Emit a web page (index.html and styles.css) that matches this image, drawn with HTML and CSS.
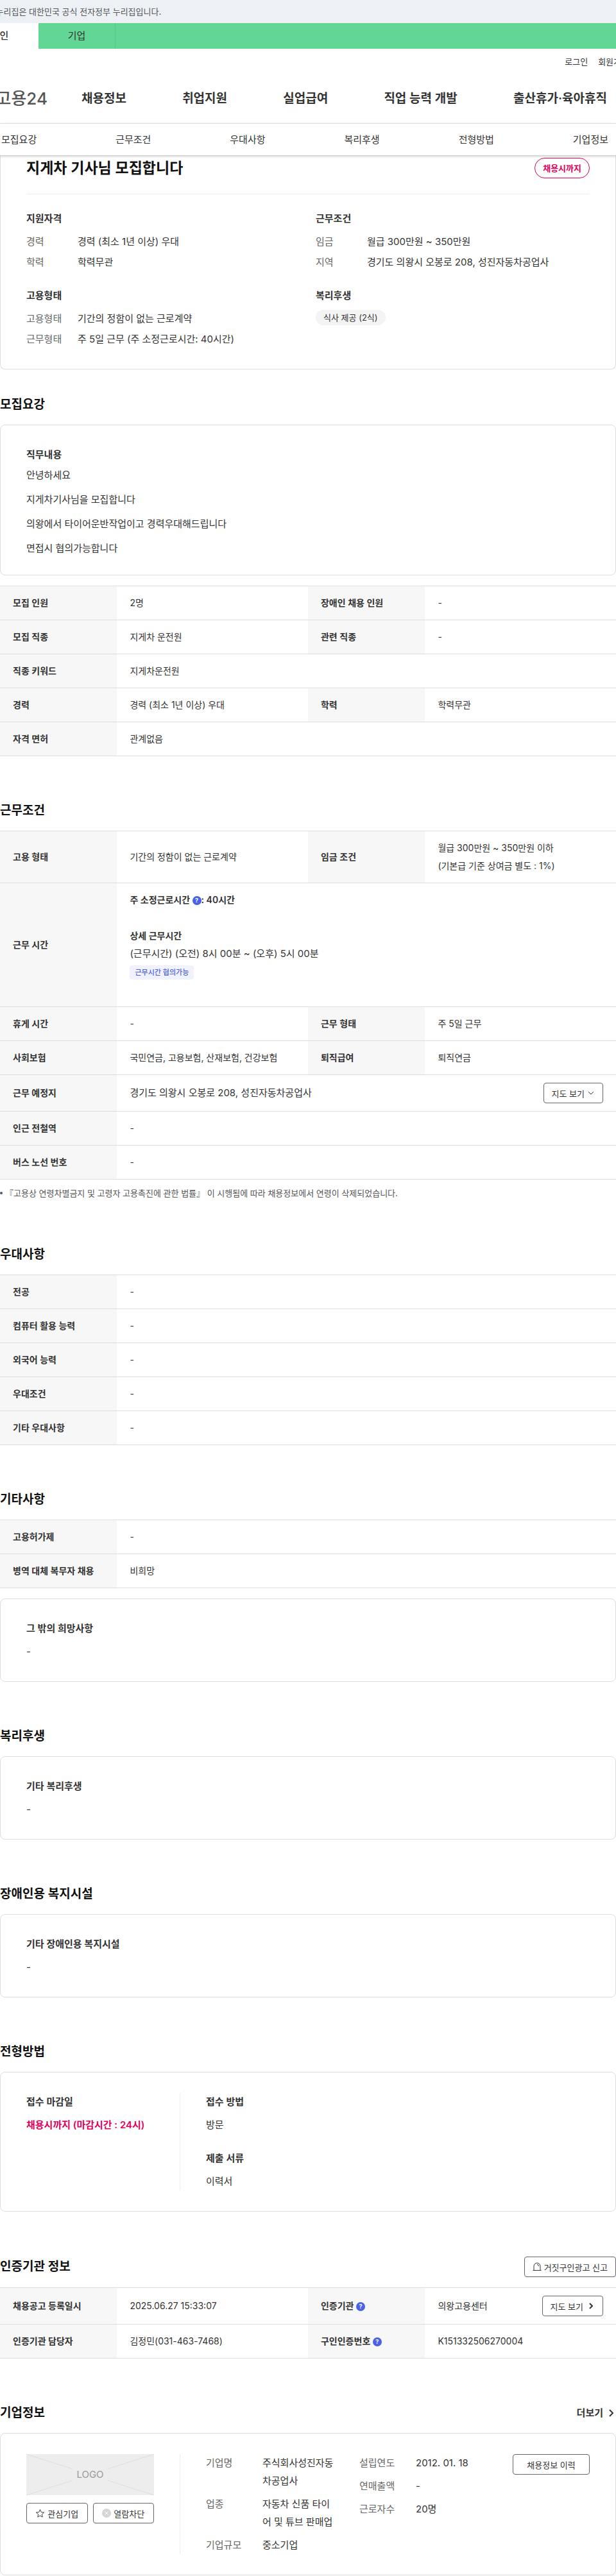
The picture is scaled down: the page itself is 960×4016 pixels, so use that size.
FILE: index.html
```html
<!DOCTYPE html>
<html lang="ko">
<head>
    <meta charset="UTF-8">
    <meta name="viewport" content="width=device-width, initial-scale=1.0">
    <title>지게차 기사님 모집합니다 | 고용24</title>
    <link rel="stylesheet" href="styles.css">
</head>
<body>
    <header>
        <div class="gov-bar"><p>이 누리집은 대한민국 공식 전자정부 누리집입니다.</p></div>
        <div class="member-tabs">
            <a href="#" class="active">개인</a>
            <a href="#">기업</a>
        </div>
        <div class="util">
            <a href="#">로그인</a>
            <a href="#">회원가입</a>
        </div>
        <div class="gnb">
            <a href="#" class="logo">고용24</a>
            <nav>
                <a href="#">채용정보</a>
                <a href="#">취업지원</a>
                <a href="#">실업급여</a>
                <a href="#">직업 능력 개발</a>
                <a href="#">출산휴가·육아휴직</a>
            </nav>
        </div>
    </header>

    <nav class="anchor-nav">
        <a href="#recruit">모집요강</a>
        <a href="#work">근무조건</a>
        <a href="#prefer">우대사항</a>
        <a href="#welfare">복리후생</a>
        <a href="#method">전형방법</a>
        <a href="#company">기업정보</a>
    </nav>

    <main>
        <div class="box summary">
            <div class="summary-head">
                <h1>지게차 기사님 모집합니다</h1>
                <span class="pill">채용시까지</span>
            </div>
            <div class="summary-grid">
                <div>
                    <h3>지원자격</h3>
                    <dl>
                        <dt>경력</dt><dd>경력 (최소 1년 이상) 우대</dd>
                        <dt>학력</dt><dd>학력무관</dd>
                    </dl>
                </div>
                <div>
                    <h3>근무조건</h3>
                    <dl>
                        <dt>임금</dt><dd>월급 300만원 ~ 350만원</dd>
                        <dt>지역</dt><dd>경기도 의왕시 오봉로 208, 성진자동차공업사</dd>
                    </dl>
                </div>
                <div>
                    <h3>고용형태</h3>
                    <dl>
                        <dt>고용형태</dt><dd>기간의 정함이 없는 근로계약</dd>
                        <dt>근무형태</dt><dd>주 5일 근무 (주 소정근로시간: 40시간)</dd>
                    </dl>
                </div>
                <div>
                    <h3>복리후생</h3>
                    <span class="tag">식사 제공 (2식)</span>
                </div>
            </div>
        </div>

        <section id="recruit">
            <div class="section-head"><h2>모집요강</h2></div>
            <div class="box job-desc">
                <h3>직무내용</h3>
                <p>안녕하세요</p>
                <p>지게차기사님을 모집합니다</p>
                <p>의왕에서 타이어운반작업이고 경력우대해드립니다</p>
                <p>면접시 협의가능합니다</p>
            </div>
            <table>
                <colgroup><col class="col-th"><col class="col-td"><col class="col-th"><col class="col-td"></colgroup>
                <tr><th>모집 인원</th><td>2명</td><th>장애인 채용 인원</th><td>-</td></tr>
                <tr><th>모집 직종</th><td>지게차 운전원</td><th>관련 직종</th><td>-</td></tr>
                <tr><th>직종 키워드</th><td colspan="3">지게차운전원</td></tr>
                <tr><th>경력</th><td>경력 (최소 1년 이상) 우대</td><th>학력</th><td>학력무관</td></tr>
                <tr><th>자격 면허</th><td colspan="3">관계없음</td></tr>
            </table>
        </section>

        <section id="work">
            <div class="section-head"><h2>근무조건</h2></div>
            <table>
                <colgroup><col class="col-th"><col class="col-td"><col class="col-th"><col class="col-td"></colgroup>
                <tr>
                    <th>고용 형태</th><td>기간의 정함이 없는 근로계약</td>
                    <th>임금 조건</th><td>월급 300만원 ~ 350만원 이하<br>(기본급 기준 상여금 별도 : 1%)</td>
                </tr>
                <tr>
                    <th>근무 시간</th>
                    <td colspan="3" class="work-time">
                        <p><strong>주 소정근로시간 <button type="button" class="help">?</button>: 40시간</strong></p>
                        <p><strong>상세 근무시간</strong></p>
                        <p class="time">(근무시간) (오전) 8시 00분 ~ (오후) 5시 00분</p>
                        <p><span class="label">근무시간 협의가능</span></p>
                    </td>
                </tr>
                <tr><th>휴게 시간</th><td>-</td><th>근무 형태</th><td>주 5일 근무</td></tr>
                <tr><th>사회보험</th><td>국민연금, 고용보험, 산재보험, 건강보험</td><th>퇴직급여</th><td>퇴직연금</td></tr>
                <tr>
                    <th>근무 예정지</th>
                    <td colspan="3">
                        <div class="with-btn">
                            <span class="address">경기도 의왕시 오봉로 208, 성진자동차공업사</span>
                            <button type="button" class="btn">지도 보기
                                <svg width="12" height="12" viewBox="0 0 12 12"><path d="M2 4l4 4 4-4"/></svg>
                            </button>
                        </div>
                    </td>
                </tr>
                <tr><th>인근 전철역</th><td colspan="3">-</td></tr>
                <tr><th>버스 노선 번호</th><td colspan="3">-</td></tr>
            </table>
            <p class="note">『고용상 연령차별금지 및 고령자 고용촉진에 관한 법률』 이 시행됨에 따라 채용정보에서 연령이 삭제되었습니다.</p>
        </section>

        <section id="prefer">
            <div class="section-head"><h2>우대사항</h2></div>
            <table>
                <colgroup><col class="col-th"><col></colgroup>
                <tr><th>전공</th><td>-</td></tr>
                <tr><th>컴퓨터 활용 능력</th><td>-</td></tr>
                <tr><th>외국어 능력</th><td>-</td></tr>
                <tr><th>우대조건</th><td>-</td></tr>
                <tr><th>기타 우대사항</th><td>-</td></tr>
            </table>
        </section>

        <section id="etc">
            <div class="section-head"><h2>기타사항</h2></div>
            <table>
                <colgroup><col class="col-th"><col></colgroup>
                <tr><th>고용허가제</th><td>-</td></tr>
                <tr><th>병역 대체 복무자 채용</th><td>비희망</td></tr>
            </table>
            <div class="box item">
                <h3>그 밖의 희망사항</h3>
                <p>-</p>
            </div>
        </section>

        <section id="welfare">
            <div class="section-head"><h2>복리후생</h2></div>
            <div class="box item">
                <h3>기타 복리후생</h3>
                <p>-</p>
            </div>
        </section>

        <section>
            <div class="section-head"><h2>장애인용 복지시설</h2></div>
            <div class="box item">
                <h3>기타 장애인용 복지시설</h3>
                <p>-</p>
            </div>
        </section>

        <section id="method">
            <div class="section-head"><h2>전형방법</h2></div>
            <div class="box split">
                <div class="side item">
                    <h3>접수 마감일</h3>
                    <p class="deadline">채용시까지 (마감시간 : 24시)</p>
                </div>
                <div class="methods">
                    <div class="item">
                        <h3>접수 방법</h3>
                        <p>방문</p>
                    </div>
                    <div class="item">
                        <h3>제출 서류</h3>
                        <p>이력서</p>
                    </div>
                </div>
            </div>
        </section>

        <section id="cert">
            <div class="section-head">
                <h2>인증기관 정보</h2>
                <button type="button" class="btn">
                    <svg width="14" height="14" viewBox="0 0 14 14"><path d="M2 12.500V6a5 5 0 0 1 10 0v6.500M.5 12.500h13M7 3.500a2.500 2.500 0 0 1 2.500 2.500"/></svg>
                    거짓구인광고 신고
                </button>
            </div>
            <table>
                <colgroup><col class="col-th"><col class="col-td"><col class="col-th"><col class="col-td"></colgroup>
                <tr>
                    <th>채용공고 등록일시</th><td>2025.06.27 15:33:07</td>
                    <th>인증기관 <button type="button" class="help">?</button></th>
                    <td>
                        <div class="with-btn">
                            <span>의왕고용센터</span>
                            <button type="button" class="btn">지도 보기
                                <svg class="bold" width="14" height="12" viewBox="0 0 14 12"><path d="M6 2l4 4-4 4"/></svg>
                            </button>
                        </div>
                    </td>
                </tr>
                <tr>
                    <th>인증기관 담당자</th><td>김정민(031-463-7468)</td>
                    <th>구인인증번호 <button type="button" class="help">?</button></th><td>K151332506270004</td>
                </tr>
            </table>
        </section>

        <section id="company">
            <div class="section-head">
                <h2>기업정보</h2>
                <a href="#" class="more">더보기
                    <svg width="12" height="12" viewBox="0 0 12 12"><path d="M2 1l5 5-5 5"/></svg>
                </a>
            </div>
            <div class="box split">
                <div class="side">
                    <div class="company-logo">
                        <svg viewBox="0 0 199 64" preserveAspectRatio="none"><path d="M0 0l72 23M199 0l-72 23M0 64l72-23M199 64l-72-23"/></svg>
                        <span>LOGO</span>
                    </div>
                    <div class="company-btns">
                        <button type="button" class="btn">
                            <svg width="15" height="15" viewBox="0 0 16 16"><path d="M8 1.500l1.900 4.300 4.600.5-3.500 3.100 1 4.600L8 11.700 4 14l1-4.600L1.500 6.300l4.600-.5z"/></svg>
                            관심기업
                        </button>
                        <button type="button" class="btn">
                            <svg width="14" height="14" viewBox="0 0 14 14"><circle class="block" cx="7" cy="7" r="7"/><path class="block-x" d="M4.500 4.500l5 5M9.500 4.500l-5 5"/></svg>
                            열람차단
                        </button>
                    </div>
                </div>
                <div class="company-info">
                    <dl>
                        <dt>기업명</dt><dd>주식회사성진자동차공업사</dd>
                        <dt>업종</dt><dd>자동차 신품 타이어 및 튜브 판매업</dd>
                        <dt>기업규모</dt><dd>중소기업</dd>
                    </dl>
                    <dl>
                        <dt>설립연도</dt><dd>2012. 01. 18</dd>
                        <dt>연매출액</dt><dd>-</dd>
                        <dt>근로자수</dt><dd>20명</dd>
                    </dl>
                    <button type="button" class="btn">채용정보 이력</button>
                </div>
            </div>
        </section>
    </main>
</body>
</html>
```
FILE: styles.css
```css
* {
    box-sizing: border-box;
}

body {
    margin: 0;
    font-family: Inter, "Noto Sans CJK KR", sans-serif;
    font-size: 15px;
    line-height: 28px;
    color: #333;
    background: #fff;
    overflow-x: hidden;
}

h1, h2, h3, p, dl, dd {
    margin: 0;
}

a {
    color: inherit;
    text-decoration: none;
}

svg {
    flex: none;
    fill: none;
    stroke: #333;
    stroke-width: 1;
}

h1 {
    font-size: 23px;
    line-height: 32px;
    font-weight: 600;
    color: #111;
}

h2 {
    font-size: 19px;
    line-height: 32px;
    font-weight: 600;
    color: #111;
}

h3 {
    font-size: 15px;
    font-weight: 600;
}

/* header */
.gov-bar {
    height: 36px;
    background: #edf1f5;
    overflow: hidden;
}

.gov-bar p {
    margin-left: -22px;
    font-size: 13px;
    line-height: 36px;
    color: #555;
    white-space: nowrap;
}

.member-tabs {
    display: flex;
    height: 40px;
    background: #62d694;
    overflow: hidden;
}

.member-tabs a {
    flex: none;
    width: 120px;
    line-height: 40px;
    text-align: center;
    border-right: 1px solid #56c586;
}

.member-tabs .active {
    margin-left: -60px;
    background: #fff;
    border-color: #fff;
    font-weight: 500;
}

.util {
    display: flex;
    justify-content: flex-end;
    gap: 16px;
    height: 40px;
    margin-right: -20px;
    font-size: 13px;
    line-height: 40px;
    white-space: nowrap;
}

.gnb {
    display: flex;
    align-items: center;
    height: 77px;
    border-bottom: 1px solid #eee;
}

.logo {
    flex: none;
    display: flex;
    justify-content: flex-end;
    width: 74px;
    margin-right: 53px;
    font-size: 26px;
    font-weight: 500;
    line-height: 40px;
    color: #555;
    white-space: nowrap;
    overflow: hidden;
}

.gnb nav {
    flex: 1;
    display: flex;
    justify-content: space-between;
    padding-right: 14px;
    font-size: 19px;
    font-weight: 600;
    white-space: nowrap;
}

.anchor-nav {
    position: relative;
    display: flex;
    justify-content: space-between;
    height: 49px;
    padding: 0 12px 0 2px;
    line-height: 49px;
    background: #fff;
    box-shadow: 0 1px 4px rgba(0, 0, 0, 0.3);
}

/* common boxes */
.box {
    padding: 32px 40px;
    border: 1px solid #ddd;
    border-radius: 8px;
}

.section-head {
    display: flex;
    justify-content: space-between;
    align-items: center;
    margin: 69px 0 15px;
}

#recruit .section-head {
    margin-top: 39px;
}

#cert .section-head {
    margin: 70px 0 16px;
}

dl {
    display: grid;
    grid-template-columns: 80px 1fr;
    gap: 4px 0;
    align-content: start;
}

dt {
    color: #666;
}

.item {
    display: flex;
    flex-direction: column;
    gap: 8px;
}

/* summary */
.summary {
    padding-top: 4px;
    border-top: 0;
    border-radius: 0 0 8px 8px;
}

.summary-head {
    display: flex;
    justify-content: space-between;
    align-items: center;
    padding-bottom: 24px;
    border-bottom: 1px solid #eee;
}

.summary-grid {
    display: grid;
    grid-template-columns: 1fr 1fr;
    gap: 24px;
    padding-top: 24px;
}

.summary-grid h3 {
    margin-bottom: 8px;
}

.pill {
    padding: 0 12px;
    border: 1px solid #e3005b;
    border-radius: 16px;
    font-size: 13px;
    font-weight: 600;
    line-height: 30px;
    color: #e3005b;
}

.tag {
    display: inline-block;
    padding: 0 12px;
    border-radius: 12px;
    font-size: 13px;
    line-height: 24px;
    background: #f4f4f4;
    vertical-align: top;
}

.job-desc {
    padding-bottom: 27px;
}

.job-desc p {
    margin-top: 10px;
}

.job-desc h3 + p {
    margin-top: 4px;
}

/* tables */
table {
    width: 100%;
    table-layout: fixed;
    border-collapse: collapse;
    font-size: 14px;
}

.box + table, table + .box {
    margin-top: 16px;
}

.col-th {
    width: 19%;
}

.col-td {
    width: 31%;
}

tr {
    border-top: 1px solid #ddd;
    border-bottom: 1px solid #ddd;
}

th, td {
    padding: 12px 20px;
    text-align: left;
}

th {
    font-weight: 600;
    background: #f7f7f7;
}

td {
    white-space: nowrap;
}

.work-time {
    padding-bottom: 40px;
}

.work-time p:first-child {
    margin-bottom: 28px;
}

.work-time .time, .address {
    font-size: 15px;
}

strong {
    font-weight: 600;
}

.label {
    display: inline-block;
    padding: 0 8px;
    border-radius: 4px;
    font-size: 11px;
    font-weight: 500;
    line-height: 22px;
    color: #4a63e6;
    background: #f1f2fd;
}

.help {
    width: 14px;
    height: 14px;
    padding: 0;
    border: 0;
    border-radius: 50%;
    font: 700 9px/14px Inter, sans-serif;
    color: #fff;
    background: #4a63e6;
    vertical-align: middle;
}

.with-btn {
    display: flex;
    justify-content: space-between;
    align-items: center;
}

.btn {
    display: flex;
    justify-content: center;
    align-items: center;
    gap: 4px;
    height: 32px;
    padding: 0 12px;
    border: 1px solid #666;
    border-radius: 4px;
    font-family: inherit;
    font-size: 13px;
    color: #333;
    background: #fff;
    white-space: nowrap;
    cursor: pointer;
}

.btn .bold {
    stroke-width: 2;
}

.note {
    display: flex;
    align-items: center;
    gap: 4px;
    margin: 8px 0 -2px;
    font-size: 13px;
    line-height: 26px;
    color: #555;
}

.note::before {
    content: "";
    width: 4px;
    height: 4px;
    border-radius: 50%;
    background: #555;
}

/* method, company */
.split {
    display: flex;
    gap: 40px;
}

.side {
    flex: none;
    width: 240px;
    padding-right: 40px;
    border-right: 1px solid #eee;
}

.deadline {
    font-weight: 600;
    color: #e3005b;
    white-space: nowrap;
}

.methods {
    display: flex;
    flex-direction: column;
    gap: 24px;
}

.more {
    display: flex;
    align-items: center;
    gap: 8px;
    font-weight: 600;
}

.more svg {
    stroke-width: 2;
}

.company-logo {
    display: grid;
    place-items: center;
    height: 64px;
    margin-bottom: 12px;
    color: #999;
    background: #ededed;
}

.company-logo svg, .company-logo span {
    grid-area: 1 / 1;
}

.company-logo svg {
    width: 100%;
    height: 64px;
    stroke: #ddd;
}

.company-btns {
    display: flex;
    gap: 8px;
}

.company-btns .btn {
    flex: 1;
    padding: 0;
}

.block {
    fill: #d5d5d5;
    stroke: none;
}

.block-x {
    stroke: #fff;
}

.company-info {
    flex: 1;
    display: flex;
    align-items: flex-start;
    gap: 40px;
}

.company-info dl {
    flex: 1;
    grid-template-columns: 88px 1fr;
    row-gap: 8px;
}

.company-info .btn {
    width: 120px;
}
```
